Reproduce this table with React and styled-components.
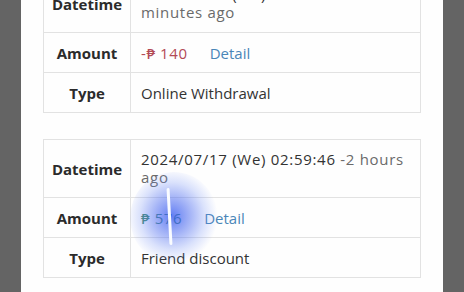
import React from "react";
import styled, { createGlobalStyle } from "styled-components";

const Global = createGlobalStyle`
  html, body { margin: 0; padding: 0; background: #646464; overflow: hidden; }
  body { font-family: "Open Sans", "Noto Sans", sans-serif; }
`;

const Screen = styled.div`
  width: 464px;
  height: 292px;
  display: flex;
  justify-content: center;
  background: #646464;
  overflow: hidden;
  position: relative;
`;

const Page = styled.div`
  width: 422px;
  background: #fefefe;
  padding: 0 22px;
  box-sizing: border-box;
  display: flex;
  flex-direction: column;
  gap: 26px;
  margin-top: -26px;
`;

const Table = styled.table`
  width: 100%;
  border-collapse: collapse;
  border: 1px solid #e2e2e2;
  font-size: 15px;
  line-height: 18px;
  color: #333;
`;

const Th = styled.th`
  width: 86px;
  border: 1px solid #e2e2e2;
  text-align: center;
  font-weight: 700;
  padding: 11px 0 10px;
  color: #2b2b2b;
`;

const Td = styled.td`
  border: 1px solid #e2e2e2;
  padding: ${(p) => (p.$wide ? "10px 10px 11px" : "11px 10px 10px")};
  text-align: left;
  letter-spacing: ${(p) => (p.$wide ? "0.7px" : "0")};
`;

const Muted = styled.span`
  color: #6a6a6a;
`;

const Money = styled.span`
  color: ${(p) => (p.$neg ? "#b24a55" : "#3e8a6a")};
  letter-spacing: 0.6px;
  font-weight: 500;
`;

const Detail = styled.a`
  color: #4a86b8;
  margin-left: 22px;
  text-decoration: none;
`;

const Touch = styled.div`
  position: absolute;
  left: 130px;
  top: 172px;
  width: 88px;
  height: 92px;
  border-radius: 50%;
  background: radial-gradient(ellipse at 48% 48%, rgba(55,90,240,0.78) 0%, rgba(80,110,240,0.55) 25%, rgba(110,140,245,0.25) 50%, rgba(130,160,250,0) 70%);
  pointer-events: none;
`;

const TouchLine = styled.div`
  position: absolute;
  left: 168px;
  top: 188px;
  width: 3px;
  height: 57px;
  background: #fafcff;
  border-radius: 2px;
  transform: rotate(-3deg);
  pointer-events: none;
`;

function Record({ date, rel, amount, neg, type }) {
  return (
    <Table>
      <tbody>
        <tr>
          <Th>Datetime</Th>
          <Td $wide>
            {date} <Muted>{rel}</Muted>
          </Td>
        </tr>
        <tr>
          <Th>Amount</Th>
          <Td>
            <Money $neg={neg}>{amount}</Money>
            <Detail>Detail</Detail>
          </Td>
        </tr>
        <tr>
          <Th>Type</Th>
          <Td>{type}</Td>
        </tr>
      </tbody>
    </Table>
  );
}

export default function App() {
  return (
    <>
      <Global />
      <Screen>
        <Page>
          <Record
            date="2024/07/17 (We) 03:41:12"
            rel="-25 minutes ago"
            amount="-₱ 140"
            neg
            type="Online Withdrawal"
          />
          <Record
            date="2024/07/17 (We) 02:59:46"
            rel="-2 hours ago"
            amount="₱ 576"
            type="Friend discount"
          />
        </Page>
        <Touch />
        <TouchLine />
      </Screen>
    </>
  );
}
